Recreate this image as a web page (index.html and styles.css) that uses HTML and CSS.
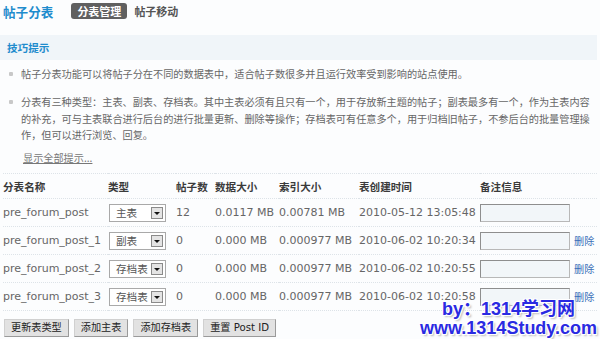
FILE: index.html
```html
<!DOCTYPE html>
<html lang="zh-CN">
<head>
  <meta charset="UTF-8">
  <link rel="stylesheet" href="styles.css">
  <title>帖子分表</title>
</head>
<body>
  <div class="page">
    <div class="topbar">
      <h1 class="title">帖子分表</h1>
      <ul class="tabs">
        <li class="current">分表管理</li>
        <li>帖子移动</li>
      </ul>
    </div>

    <div class="tipbox">
      <h3>技巧提示</h3>
    </div>
    <ul class="tips">
      <li>帖子分表功能可以将帖子分在不同的数据表中，适合帖子数很多并且运行效率受到影响的站点使用。</li>
      <li>分表有三种类型：主表、副表、存档表。其中主表必须有且只有一个，用于存放新主题的帖子；副表最多有一个，作为主表内容的补充，可与主表联合进行后台的进行批量更新、删除等操作；存档表可有任意多个，用于归档旧帖子，不参后台的批量管理操作，但可以进行浏览、回复。</li>
    </ul>
    <a class="more" href="#">显示全部提示...</a>

    <table class="tbl">
      <tr class="head">
        <th class="c1">分表名称</th>
        <th class="c2">类型</th>
        <th class="c3">帖子数</th>
        <th class="c4">数据大小</th>
        <th class="c5">索引大小</th>
        <th class="c6">表创建时间</th>
        <th class="c7">备注信息</th>
        <th></th>
      </tr>
      <tr>
        <td>pre_forum_post</td>
        <td><span class="sel"><span class="sel-txt">主表</span><span class="sel-btn"></span></span></td>
        <td>12</td>
        <td>0.0117 MB</td>
        <td>0.00781 MB</td>
        <td>2010-05-12 13:05:48</td>
        <td><span class="note"></span></td>
        <td></td>
      </tr>
      <tr>
        <td>pre_forum_post_1</td>
        <td><span class="sel"><span class="sel-txt">副表</span><span class="sel-btn"></span></span></td>
        <td>0</td>
        <td>0.000 MB</td>
        <td>0.000977 MB</td>
        <td>2010-06-02 10:20:34</td>
        <td><span class="note"></span></td>
        <td><a class="del" href="#">删除</a></td>
      </tr>
      <tr>
        <td>pre_forum_post_2</td>
        <td><span class="sel"><span class="sel-txt">存档表</span><span class="sel-btn"></span></span></td>
        <td>0</td>
        <td>0.000 MB</td>
        <td>0.000977 MB</td>
        <td>2010-06-02 10:20:55</td>
        <td><span class="note"></span></td>
        <td><a class="del" href="#">删除</a></td>
      </tr>
      <tr>
        <td>pre_forum_post_3</td>
        <td><span class="sel"><span class="sel-txt">存档表</span><span class="sel-btn"></span></span></td>
        <td>0</td>
        <td>0.000 MB</td>
        <td>0.000977 MB</td>
        <td>2010-06-02 10:20:58</td>
        <td><span class="note"></span></td>
        <td><a class="del" href="#">删除</a></td>
      </tr>
    </table>

    <div class="btns">
      <button class="btn">更新表类型</button>
      <button class="btn">添加主表</button>
      <button class="btn">添加存档表</button>
      <button class="btn">重置 Post ID</button>
    </div>

    <div class="mark">by：1314学习网<br>www.1314Study.com</div>
  </div>
</body>
</html>
```

FILE: styles.css
```css
body {
  margin: 0;
  background-color: #fcfdfe;
  font-family: "DejaVu Sans", "Noto Sans CJK SC", sans-serif;
  color: #666;
}

.page {
  position: relative;
  width: 600px;
  height: 339px;
  overflow: hidden;
}

.topbar {
  display: flex;
  align-items: center;
  height: 22px;
  padding: 0 0 13px 3px;
}

.title {
  margin: 0 16px 0 0;
  font-size: 12.6px;
  font-weight: bold;
  color: #1f8ccd;
  font-family: "Noto Sans CJK SC", sans-serif;
}

.tabs {
  display: flex;
  gap: 0;
  margin: 0 0 0 2px;
  padding: 0;
  list-style: none;
}

.tabs li {
  height: 16px;
  line-height: 16px;
  padding: 0 6px;
  font-size: 11px;
  font-weight: bold;
  color: #555;
  font-family: "Noto Sans CJK SC", sans-serif;
}

.tabs .current {
  background-color: #606060;
  color: #fff;
  border-radius: 3px;
  margin-right: 1px;
}

.tipbox {
  width: 597px;
  height: 25px;
  background-color: #f0f5f9;
  display: flex;
  align-items: center;
}

.tipbox h3 {
  margin: 0 0 0 7px;
  font-size: 10.6px;
  font-weight: bold;
  color: #1f8ccd;
  font-family: "Noto Sans CJK SC", sans-serif;
}

.tips {
  margin: 6px 0 0;
  padding: 0;
  width: 596px;
  list-style: none;
  font-size: 10.17px;
  line-height: 16.5px;
  font-family: "Noto Sans CJK SC", sans-serif;
}

.tips li {
  display: flex;
  margin-bottom: 11.5px;
}

.tips li::before {
  content: "";
  flex: none;
  width: 4px;
  height: 4px;
  margin: 6px 8px 0 9px;
  background-color: #c8c8c8;
  border-radius: 1px;
}

.tips li:last-child {
  margin-bottom: 0;
}

.more {
  display: inline-block;
  margin: 6px 0 0 23px;
  font-size: 10.17px;
  line-height: 16.5px;
  color: #777;
  font-family: "Noto Sans CJK SC", sans-serif;
}

.tbl {
  margin: 7px 0 0 3px;
  border-collapse: collapse;
  table-layout: fixed;
  width: 594px;
  font-size: 11px;
}

.tbl th,
.tbl td {
  padding: 0;
  text-align: left;
  white-space: nowrap;
  border-top: 1px dotted #dde3e8;
  border-bottom: 1px dotted #dde3e8;
}

.tbl th {
  height: 24px;
  color: #3a3a3a;
  font-weight: bold;
  font-family: "Noto Sans CJK SC", sans-serif;
  font-size: 10.6px;
}

.tbl td {
  height: 27px;
}

.c1 { width: 105px; }
.c2 { width: 68px; }
.c3 { width: 39px; }
.c4 { width: 64px; }
.c5 { width: 80px; }
.c6 { width: 121px; }
.c7 { width: 94px; }

.sel {
  display: inline-flex;
  align-items: center;
  justify-content: space-between;
  width: 57px;
  height: 18px;
  margin-left: 1px;
  box-sizing: border-box;
  border: 1px solid #a9a9a9;
  background-color: #fff;
  vertical-align: middle;
}

.sel-txt {
  padding-left: 6px;
  font-size: 10.6px;
  color: #555;
  font-family: "Noto Sans CJK SC", sans-serif;
}

.sel-btn {
  position: relative;
  width: 12px;
  height: 12px;
  margin-right: 2px;
  box-sizing: border-box;
  border: 1px solid #8a8a8a;
  background-color: #e4e4e4;
}

.sel-btn::after {
  content: "";
  position: absolute;
  left: 2px;
  top: 4px;
  border-left: 3px solid transparent;
  border-right: 3px solid transparent;
  border-top: 3px solid #111;
}

.note {
  display: inline-block;
  width: 90px;
  height: 18px;
  box-sizing: border-box;
  border: 1px solid #b8b8b8;
  border-top-color: #8e8e8e;
  border-left-color: #8e8e8e;
  background-color: #f2f6f9;
  vertical-align: middle;
}

.del {
  color: #3a6fb8;
  text-decoration: none;
  font-size: 10.17px;
  font-family: "Noto Sans CJK SC", sans-serif;
}

.btns {
  display: flex;
  gap: 5px;
  margin: 8px 0 0 4px;
}

.btn {
  height: 18px;
  padding: 0 6px;
  border: 1px solid #9a9a9a;
  border-top-color: #d0d0d0;
  border-left-color: #d0d0d0;
  background-color: #e2e2e2;
  color: #222;
  font-size: 10.17px;
  line-height: 16px;
  font-family: "DejaVu Sans", "Noto Sans CJK SC", sans-serif;
}

.mark {
  position: absolute;
  left: 420px;
  top: 300px;
  font-family: "Liberation Sans", "Noto Sans CJK SC", sans-serif;
  font-weight: bold;
  font-size: 18px;
  line-height: 19px;
  color: #2a2ae2;
  text-align: center;
  text-shadow: 1px 1px 0 #fff, -1px -1px 0 #fff, 1px -1px 0 #fff, -1px 1px 0 #fff, 2px 2px 2px #bbb;
}
```
